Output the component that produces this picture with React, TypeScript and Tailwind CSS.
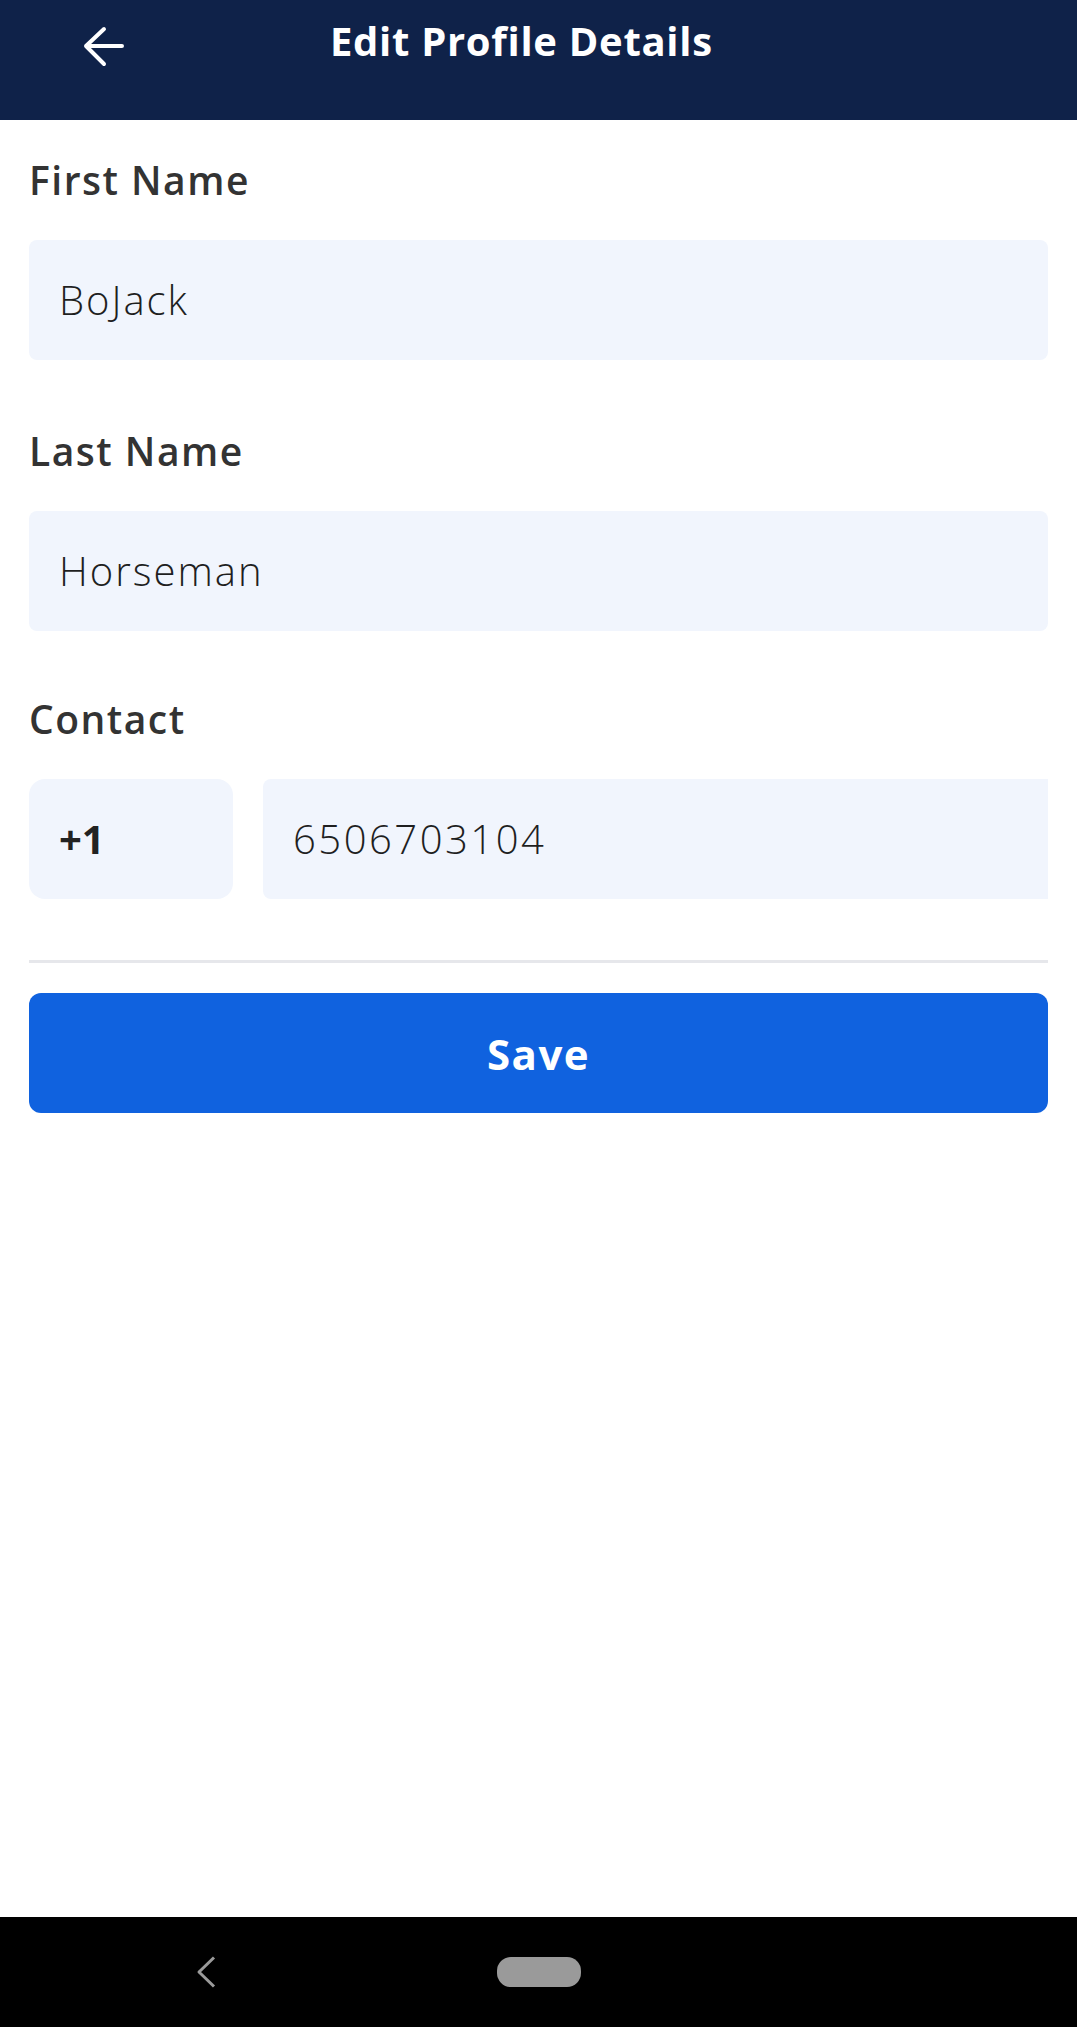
import React from "react";

const BackArrow = () => (
  <svg width="44" height="44" viewBox="0 0 44 44" fill="none">
    <path
      d="M22 4 L4 21 L22 39 M4 21 H40"
      stroke="white"
      strokeWidth="4"
      strokeLinecap="round"
      strokeLinejoin="round"
    />
  </svg>
);

const Field = ({ label, value, top }: { label: string; value: string; top: string }) => (
  <div className={top}>
    <div className="text-[39px] leading-[40px] font-semibold tracking-[1.5px] text-[#333333]">{label}</div>
    <div className="mt-[40px] h-[120px] rounded-[8px] bg-[#f1f5fd] flex items-center pl-[30px] text-[40px] font-light tracking-[2px] text-[#1f1f1f]">
      {value}
    </div>
  </div>
);

export default function App() {
  return (
    <div className="h-[2027px] w-full flex flex-col bg-white" style={{ fontFamily: "'Open Sans', Lato, sans-serif" }}>
      {/* top bar */}
      <header className="h-[120px] bg-[#0f2249] flex items-start shrink-0">
        <div className="ml-[82px] mt-[25px]">
          <BackArrow />
        </div>
        <h1 className="ml-[204px] mt-[21px] text-[40px] leading-[40px] font-bold tracking-[0.7px] text-white">
          Edit Profile Details
        </h1>
      </header>

      <main className="flex-1 px-[29px]">
        <Field label="First Name" value="BoJack" top="pt-[40px]" />
        <Field label="Last Name" value="Horseman" top="mt-[71px]" />

        {/* contact */}
        <div className="mt-[68px]">
          <div className="text-[39px] leading-[40px] font-semibold tracking-[1.5px] text-[#333333]">Contact</div>
          <div className="mt-[40px] flex gap-[30px]">
            <div className="w-[204px] h-[120px] rounded-[16px] bg-[#f1f5fd] flex items-center pl-[30px] text-[40px] font-bold text-[#222222]">
              +1
            </div>
            <div className="flex-1 h-[120px] rounded-l-[8px] bg-[#f1f5fd] flex items-center pl-[30px] text-[40px] font-light tracking-[2.5px] text-[#1f1f1f]">
              6506703104
            </div>
          </div>
        </div>

        <div className="mt-[61px] h-[3px] bg-[#e6e7eb]" />

        <button className="mt-[30px] w-full h-[120px] rounded-[12px] bg-[#1062df] text-white text-[42px] font-bold tracking-[1.5px]">
          Save
        </button>
      </main>

      {/* system nav bar */}
      <nav className="h-[110px] bg-black shrink-0 flex items-center">
        <svg className="ml-[196px]" width="21" height="32" viewBox="0 0 21 32" fill="none">
          <path d="M18 1.5 L3 16 L18 30.5" stroke="#9a9a9a" strokeWidth="3" strokeLinejoin="round" />
        </svg>
        <div className="ml-[280px] w-[84px] h-[30px] rounded-[14px] bg-[#9a9a9a]" />
      </nav>
    </div>
  );
}
